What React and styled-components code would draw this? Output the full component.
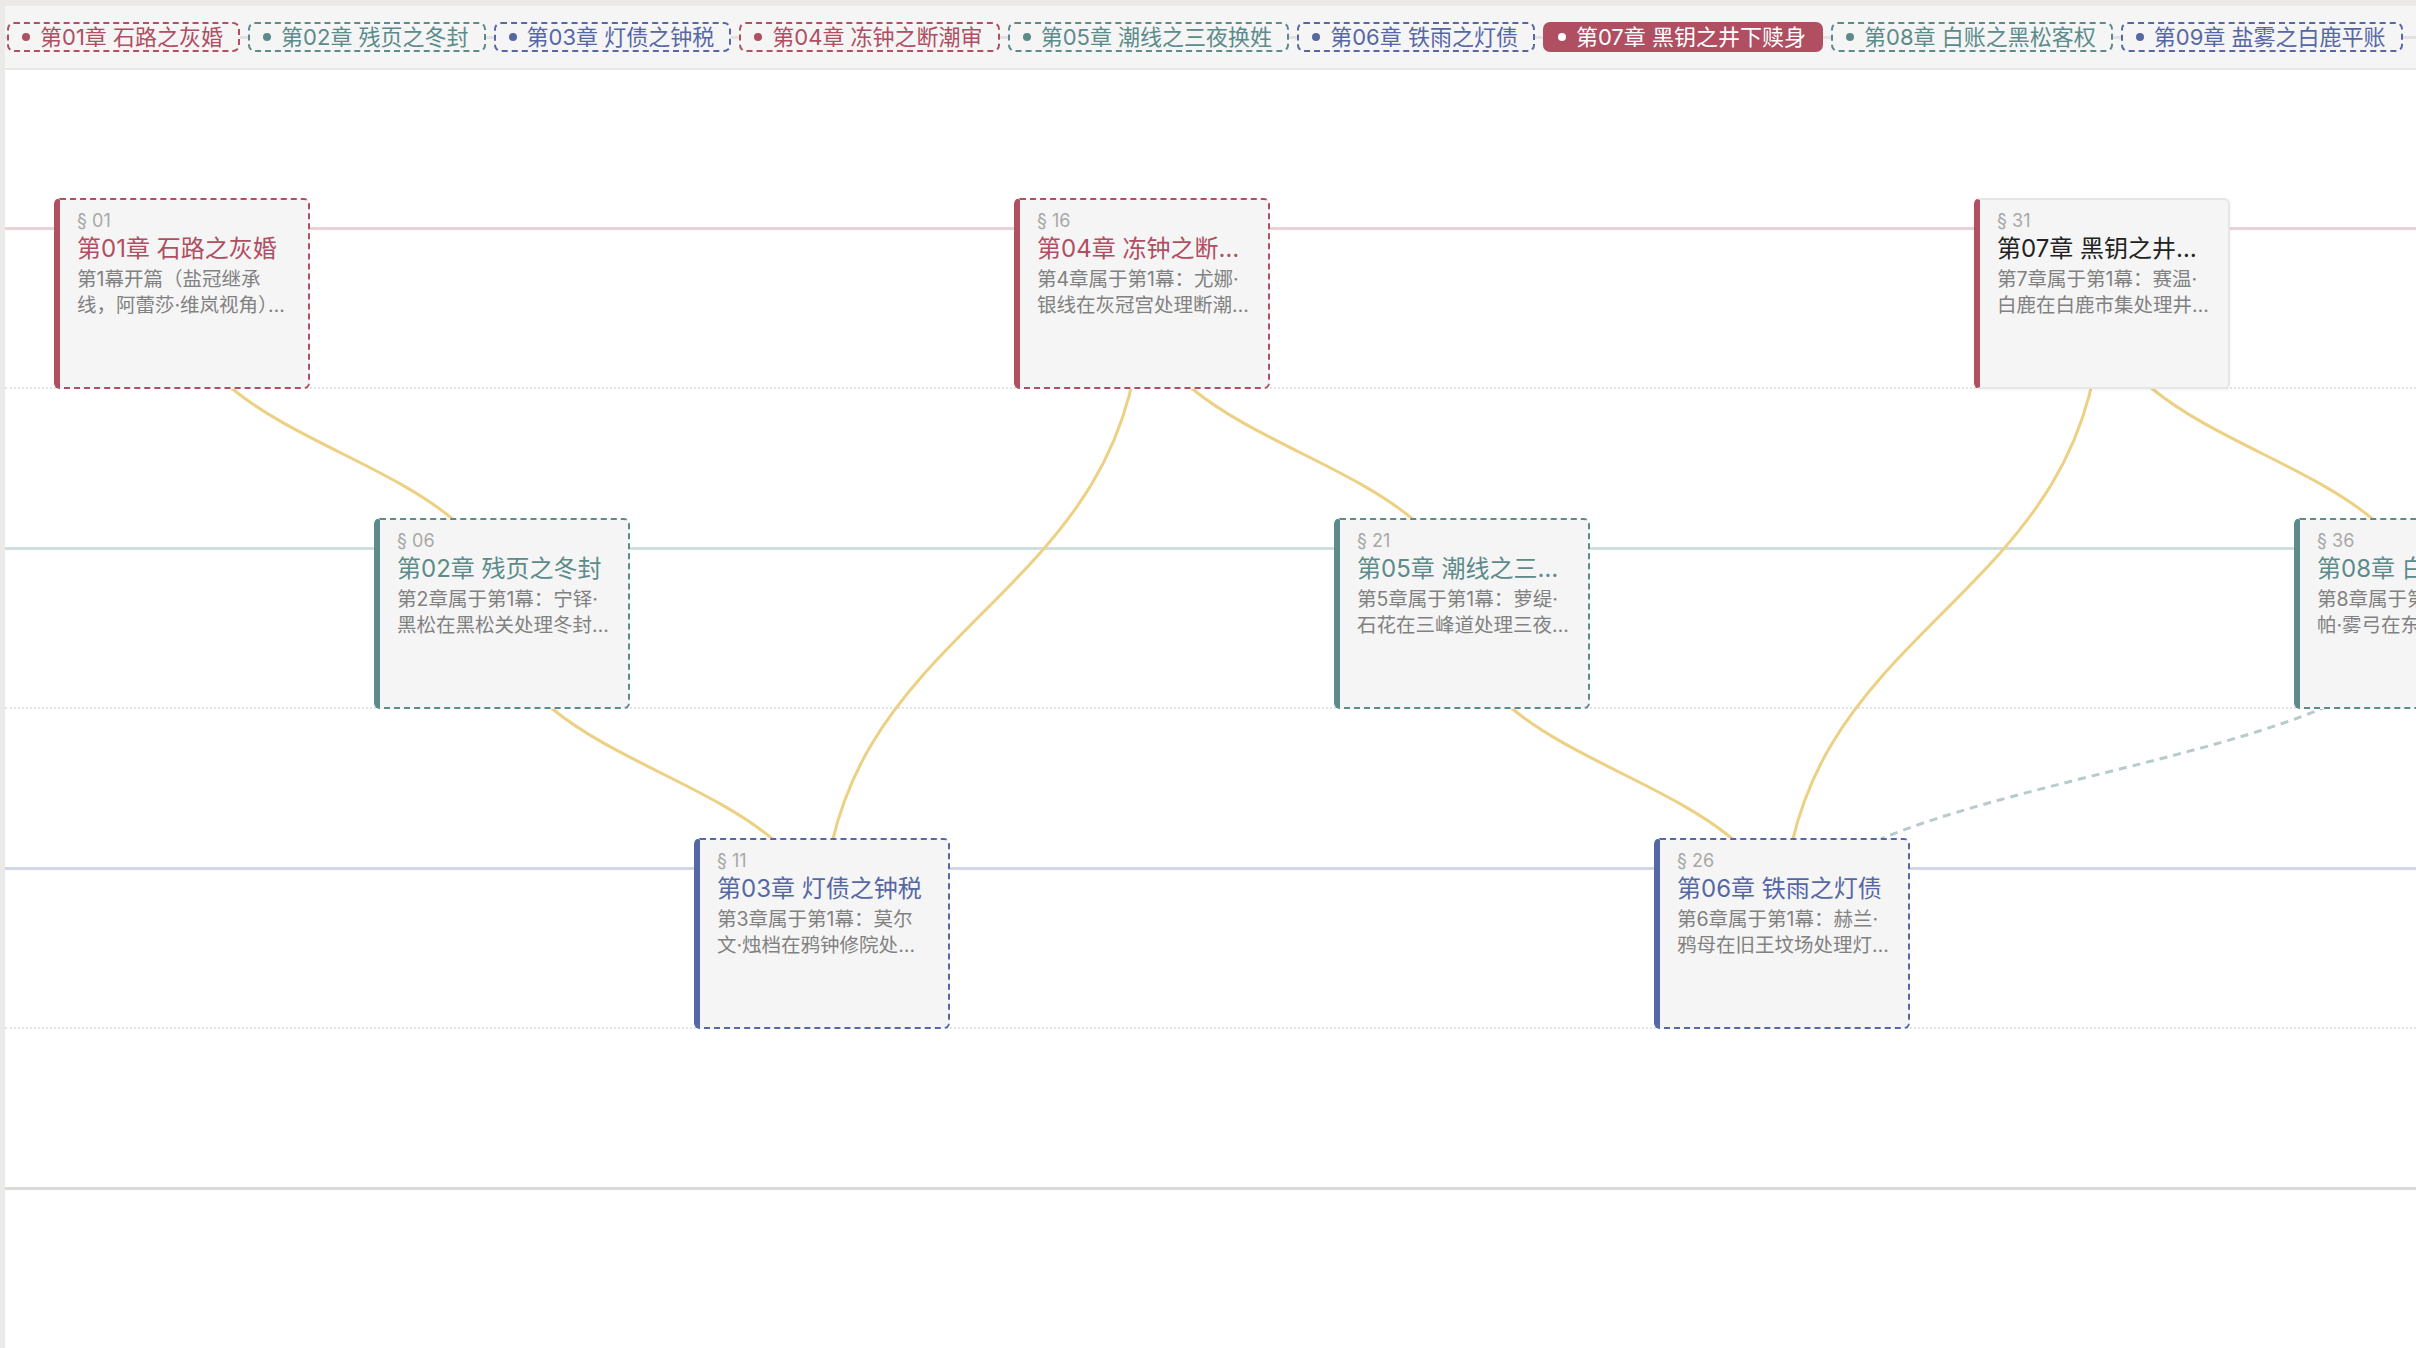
import React from "react";
import styled, { createGlobalStyle } from "styled-components";

const TONES = {
    rose: { main: "#b04e62", lane: "#ebd0d7" },
    teal: { main: "#5b8b8a", lane: "#cfdfe0" },
    blue: { main: "#5667a6", lane: "#d1d6ea" },
};

const chapters = [
    { no: "01", name: "石路之灰婚", tone: "rose" },
    { no: "02", name: "残页之冬封", tone: "teal" },
    { no: "03", name: "灯债之钟税", tone: "blue" },
    { no: "04", name: "冻钟之断潮审", tone: "rose" },
    { no: "05", name: "潮线之三夜换姓", tone: "teal" },
    { no: "06", name: "铁雨之灯债", tone: "blue" },
    { no: "07", name: "黑钥之井下赎身", tone: "rose" },
    { no: "08", name: "白账之黑松客权", tone: "teal" },
    { no: "09", name: "盐雾之白鹿平账", tone: "blue" },
];

const ACTIVE = 6;

// one node per chapter, spaced along the timeline
const scenes = [
    { sec: "01", ch: 0, summary: "第1幕开篇（盐冠继承线，阿蕾莎·维岚视角）：灰婚之约在石路尽头订下" },
    { sec: "06", ch: 1, summary: "第2章属于第1幕：宁铎·黑松在黑松关处理冬封残页的旧案" },
    { sec: "11", ch: 2, summary: "第3章属于第1幕：莫尔文·烛档在鸦钟修院处理灯债与钟税" },
    { sec: "16", ch: 3, summary: "第4章属于第1幕：尤娜·银线在灰冠宫处理断潮审的余波" },
    { sec: "21", ch: 4, summary: "第5章属于第1幕：萝缇·石花在三峰道处理三夜换姓的约定" },
    { sec: "26", ch: 5, summary: "第6章属于第1幕：赫兰·鸦母在旧王坟场处理灯债与铁雨" },
    { sec: "31", ch: 6, summary: "第7章属于第1幕：赛温·白鹿在白鹿市集处理井下赎身之事" },
    { sec: "36", ch: 7, summary: "第8章属于第1幕：卡斯帕·雾弓在东港处理白账与客权" },
];

const links = [
    { from: 0, to: 1 },
    { from: 1, to: 2 },
    { from: 3, to: 2 },
    { from: 3, to: 4 },
    { from: 4, to: 5 },
    { from: 6, to: 5 },
    { from: 6, to: 7 },
    { from: 7, to: 5, dashed: true },
];

const LANE_H = 320;
const STEP = 320;
const X0 = 49;
const CARD_W = 256;
const CARD_H = 191;
const CARD_TOP = 130;

function cardBox(index) {
    const lane = scenes[index].ch % 3;
    const left = X0 + STEP * index;
    const top = lane * LANE_H + CARD_TOP;
    return { left, top, cx: left + CARD_W / 2, cy: top + CARD_H / 2 };
}

function linkPath(from, to) {
    const a = cardBox(from);
    const b = cardBox(to);
    const my = (a.cy + b.cy) / 2;
    return `M ${a.cx} ${a.cy} C ${a.cx} ${my}, ${b.cx} ${my}, ${b.cx} ${b.cy}`;
}

export default function App() {
    return (
        <>
            <GlobalStyle />
            <Frame>
                <Panel>
                    <ChapterBar>
                        {chapters.map((c, i) => {
                            const color = TONES[c.tone].main;
                            return (
                                <Chip key={c.no} $c={color} $active={i === ACTIVE}>
                                    <Dot />
                                    第{c.no}章 {c.name}
                                </Chip>
                            );
                        })}
                    </ChapterBar>

                    <Canvas>
                        {[0, 1, 2].map((lane) => (
                            <Lane key={lane} $line={TONES[chapters[lane].tone].lane} />
                        ))}

                        <Links width="3000" height={LANE_H * 3}>
                            {links.map((l) => (
                                <path
                                    key={`${l.from}-${l.to}`}
                                    d={linkPath(l.from, l.to)}
                                    fill="none"
                                    stroke={l.dashed ? "#b7cbcd" : "#ecd084"}
                                    strokeWidth="3"
                                    strokeDasharray={l.dashed ? "8 6" : undefined}
                                />
                            ))}
                        </Links>

                        {scenes.map((s, i) => {
                            const chapter = chapters[s.ch];
                            const color = TONES[chapter.tone].main;
                            const box = cardBox(i);
                            const active = s.ch === ACTIVE;
                            return (
                                <Card
                                    key={s.sec}
                                    $c={color}
                                    $active={active}
                                    style={{ left: box.left, top: box.top }}
                                >
                                    <Section>§ {s.sec}</Section>
                                    <Title $c={active ? "#222" : color}>
                                        第{chapter.no}章 {chapter.name}
                                    </Title>
                                    <Summary>{s.summary}</Summary>
                                </Card>
                            );
                        })}
                    </Canvas>
                </Panel>
            </Frame>
        </>
    );
}

const GlobalStyle = createGlobalStyle`
    html, body {
        margin: 0;
        padding: 0;
        background: #ebeae8;
    }

    * {
        box-sizing: border-box;
    }
`;

const Frame = styled.div`
    padding: 6px 0 0 5px;
    min-height: 100vh;
    font-family: "Inter", "Noto Sans CJK SC", sans-serif;
`;

const Panel = styled.div`
    min-height: calc(100vh - 6px);
    background: #ffffff;
    overflow: hidden;
`;

const ChapterBar = styled.div`
    position: relative;
    z-index: 2;
    height: 62px;
    display: flex;
    align-items: center;
    gap: 8px;
    padding-left: 2px;
    background: #f5f5f5;
    box-shadow: 0 2px 0 #e7e7e6;
    overflow: hidden;

    &::before{
        content: "";
        position: absolute;
        left: 0;
        right: 0;
        top: 30px;
        height: 3px;
        background: #e2e2e1;
    }
`;

const Chip = styled.div`
    position: relative;
    flex: none;
    display: flex;
    align-items: center;
    gap: 10px;
    height: 30px;
    padding: 0 15px 0 13px;
    border: 2px ${(p) => (p.$active ? "solid" : "dashed")} ${(p) => p.$c};
    border-radius: 7px;
    background: ${(p) => (p.$active ? p.$c : "#f5f5f5")};
    color: ${(p) => (p.$active ? "#ffffff" : p.$c)};
    font-size: 22px;
    line-height: 26px;
    white-space: nowrap;
`;

const Dot = styled.span`
    width: 8px;
    height: 8px;
    border-radius: 50%;
    background: currentColor;
    flex: none;
`;

const Canvas = styled.div`
    position: relative;
    height: 1122px;
    border-bottom: 3px solid #dadad9;
    overflow: hidden;
`;

const Lane = styled.div`
    position: relative;
    height: ${LANE_H}px;

    &::before{
        content: "";
        position: absolute;
        left: 0;
        right: 0;
        top: 159px;
        height: 3px;
        background: ${(p) => p.$line};
    }

    &::after{
        content: "";
        position: absolute;
        left: 0;
        right: 0;
        bottom: -1px;
        border-top: 2px dotted #e3e3e3;
    }
`;

const Links = styled.svg`
    position: absolute;
    left: 0;
    top: 0;
    pointer-events: none;
`;

const Card = styled.div`
    position: absolute;
    width: ${CARD_W}px;
    height: ${CARD_H}px;
    padding: 10px 17px 0 17px;
    background: #f5f5f5;
    border: 2px ${(p) => (p.$active ? "solid #e6e6e6" : `dashed ${p.$c}`)};
    border-left: 6px solid ${(p) => p.$c};
    border-radius: 6px;
    box-shadow: ${(p) => (p.$active ? "0 1px 4px rgba(0, 0, 0, 0.06)" : "none")};
`;

const Section = styled.div`
    font-size: 18px;
    line-height: 22px;
    color: #a8a8a8;
`;

const Title = styled.div`
    margin-top: 2px;
    font-size: 24px;
    line-height: 30px;
    color: ${(p) => p.$c};
    white-space: nowrap;
    overflow: hidden;
    text-overflow: ellipsis;
`;

const Summary = styled.div`
    margin-top: 3px;
    font-size: 19.5px;
    line-height: 25.5px;
    color: #818181;
    display: -webkit-box;
    -webkit-line-clamp: 2;
    -webkit-box-orient: vertical;
    overflow: hidden;
`;
